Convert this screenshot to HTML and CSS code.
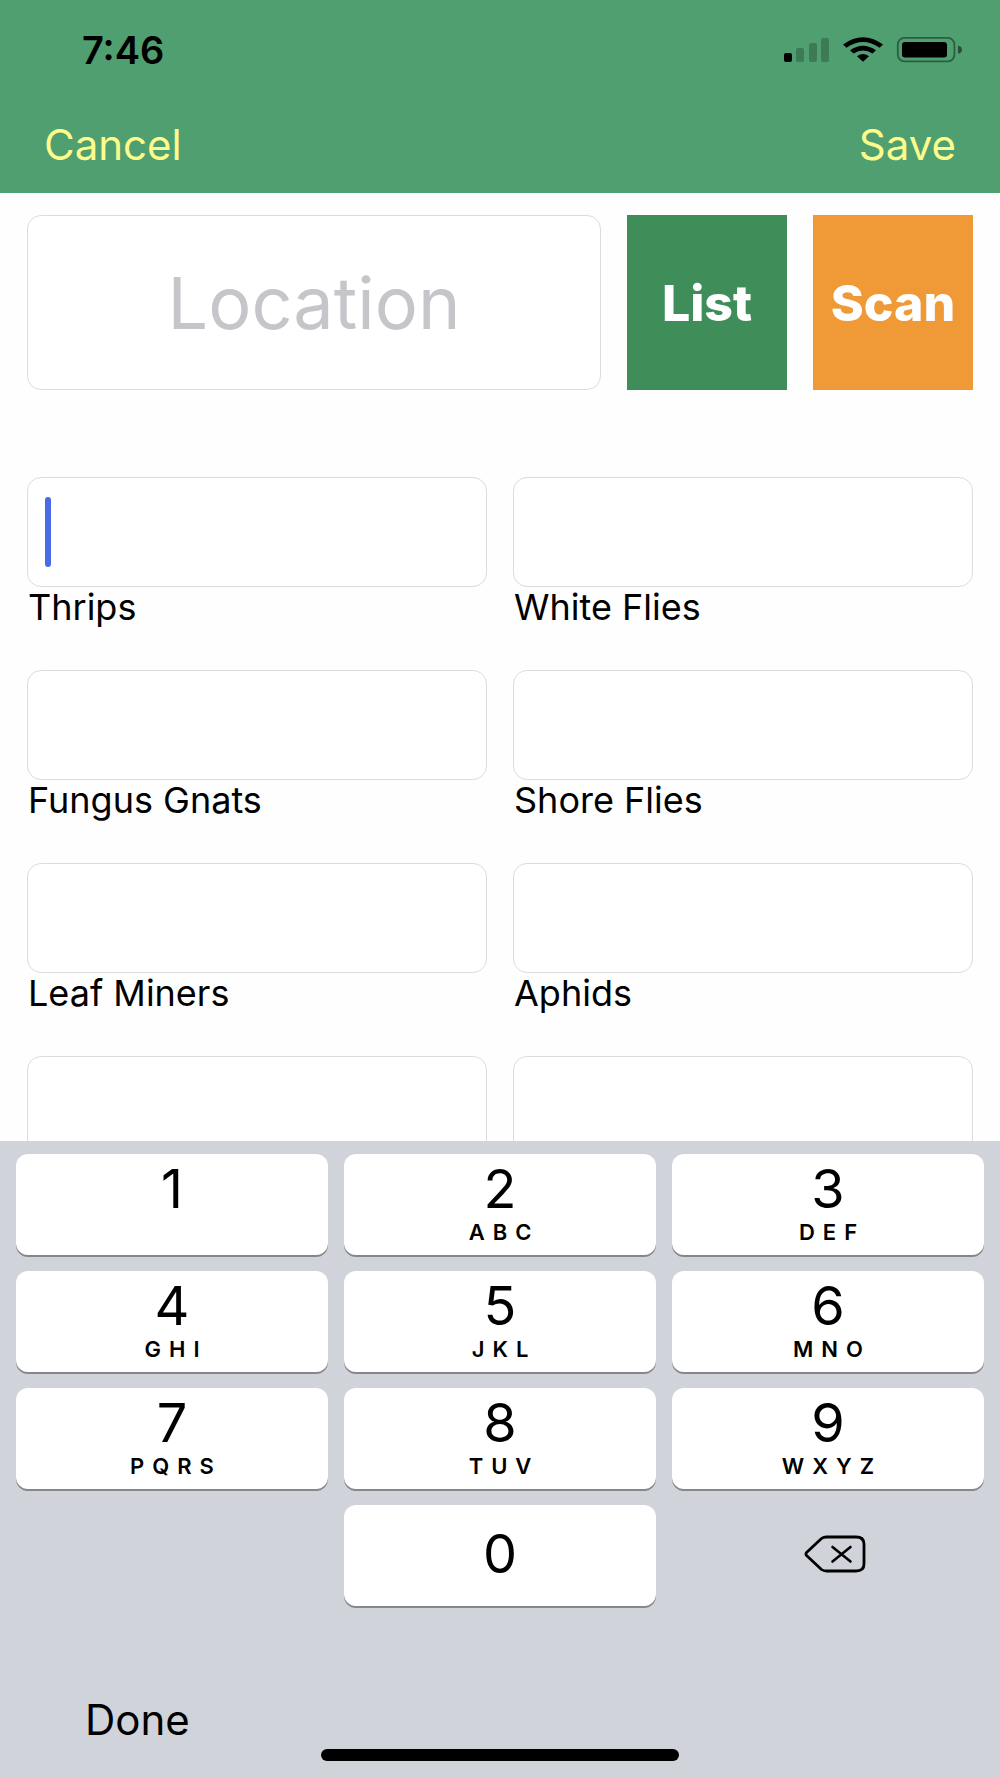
FILE: index.html
```html
<!DOCTYPE html>
<html lang="en">
<head>
    <meta charset="UTF-8">
    <meta name="viewport" content="width=device-width, initial-scale=1.0">
    <title>Pest Count</title>
    <link rel="stylesheet" href="styles.css">
</head>
<body>
    <div class="app">
        <header class="header">
            <div class="status-bar">
                <span class="time">7:46</span>
                <svg class="status-icons" width="178" height="26" viewBox="0 0 178 26">
                    <rect x="0" y="16" width="8" height="9" rx="2"/>
                    <g opacity="0.22">
                        <rect x="12" y="11" width="8" height="14" rx="2"/>
                        <rect x="25" y="6" width="8" height="19" rx="2"/>
                        <rect x="37" y="1" width="8" height="24" rx="2"/>
                    </g>
                    <path d="M59 7.5 Q79 -7 99 7.5 L95.6 10.8 Q79 -0.7 62.4 10.8Z"/>
                    <path d="M66 13.3 Q79 4.2 92 13.3 L88.5 16.6 Q79 10.4 69.5 16.6Z"/>
                    <path d="M73 19.2 Q79 14.8 85 19.2 L79 24.7Z"/>
                    <rect x="113.8" y="0.9" width="56.6" height="23.4" rx="6.5" fill="none" stroke="#000" stroke-width="1.8" opacity="0.42"/>
                    <rect x="118" y="5" width="45" height="15.5" rx="3"/>
                    <path d="M174 8.5 Q178 9.5 178 12.7 Q178 15.8 174 16.8Z" opacity="0.5"/>
                </svg>
            </div>
            <nav class="nav-bar">
                <button class="nav-btn" type="button">Cancel</button>
                <button class="nav-btn" type="button">Save</button>
            </nav>
        </header>

        <main class="content">
            <div class="location-row">
                <input class="box location" type="text" placeholder="Location" aria-label="Location">
                <button class="action list" type="button">List</button>
                <button class="action scan" type="button">Scan</button>
            </div>

            <form class="counts">
                <div class="field">
                    <input class="box" id="thrips" type="text" inputmode="numeric">
                    <span class="caret"></span>
                    <label for="thrips">Thrips</label>
                </div>
                <div class="field">
                    <input class="box" id="white-flies" type="text" inputmode="numeric">
                    <label for="white-flies">White Flies</label>
                </div>
                <div class="field">
                    <input class="box" id="fungus-gnats" type="text" inputmode="numeric">
                    <label for="fungus-gnats">Fungus Gnats</label>
                </div>
                <div class="field">
                    <input class="box" id="shore-flies" type="text" inputmode="numeric">
                    <label for="shore-flies">Shore Flies</label>
                </div>
                <div class="field">
                    <input class="box" id="leaf-miners" type="text" inputmode="numeric">
                    <label for="leaf-miners">Leaf Miners</label>
                </div>
                <div class="field">
                    <input class="box" id="aphids" type="text" inputmode="numeric">
                    <label for="aphids">Aphids</label>
                </div>
                <div class="field">
                    <input class="box" type="text" inputmode="numeric" aria-label="Count">
                </div>
                <div class="field">
                    <input class="box" type="text" inputmode="numeric" aria-label="Count">
                </div>
            </form>
        </main>

        <section class="keyboard">
            <div class="keys">
                <button class="key" type="button">1<span class="letters"></span></button>
                <button class="key" type="button">2<span class="letters">ABC</span></button>
                <button class="key" type="button">3<span class="letters">DEF</span></button>
                <button class="key" type="button">4<span class="letters">GHI</span></button>
                <button class="key" type="button">5<span class="letters">JKL</span></button>
                <button class="key" type="button">6<span class="letters">MNO</span></button>
                <button class="key" type="button">7<span class="letters">PQRS</span></button>
                <button class="key" type="button">8<span class="letters">TUV</span></button>
                <button class="key" type="button">9<span class="letters">WXYZ</span></button>
                <button class="key zero" type="button">0</button>
                <button class="key delete" type="button" aria-label="Delete">
                    <svg width="62" height="38" viewBox="0 0 62 38" fill="none" stroke="#000" stroke-linecap="round" stroke-linejoin="round">
                        <path stroke-width="2.8" d="M22.5 2 H52 Q60 2 60 9 V29 Q60 36 52 36 H22.5 Q19.5 36 17.5 34.5 L2.8 20.8 Q1 19 2.8 17.2 L17.5 3.5 Q19.5 2 22.5 2Z"/>
                        <path stroke-width="2.6" d="M28.5 12 L46.5 26.5 M46.5 12 L28.5 26.5"/>
                    </svg>
                </button>
            </div>
            <div class="toolbar">
                <button class="done" type="button">Done</button>
            </div>
            <div class="home-bar"></div>
        </section>
    </div>
</body>
</html>
```
FILE: styles.css
```css
* {
    box-sizing: border-box;
}

body {
    margin: 0;
    background: #fefefe;
    color: #000;
    font-family: Inter, "Liberation Sans", sans-serif;
}

button {
    border: none;
    padding: 0;
    background: none;
    color: inherit;
    font-family: inherit;
    cursor: pointer;
}

.app {
    height: 100vh;
    display: flex;
    flex-direction: column;
}

/* Header */
.header {
    background: #4f9f70;
}

.status-bar {
    height: 100px;
    padding: 0 38px 0 82px;
    display: flex;
    justify-content: space-between;
    align-items: center;
}

.time {
    font-size: 38px;
    font-weight: 600;
}

.nav-bar {
    height: 93px;
    padding: 0 44px 4px;
    display: flex;
    justify-content: space-between;
    align-items: center;
}

.nav-btn {
    font-size: 42px;
    color: #fdfb8b;
}

/* Form */
.content {
    flex: 1;
    min-height: 0;
    overflow: hidden;
    padding: 22px 27px 0;
}

.box {
    width: 100%;
    height: 110px;
    padding: 0 18px;
    border: 1px solid #dcdcdd;
    border-radius: 14px;
    background: #fff;
    font-family: inherit;
    font-size: 42px;
    outline: none;
}

.location-row {
    display: flex;
    gap: 26px;
    margin-bottom: 87px;
}

.location {
    flex: 1;
    min-width: 0;
    height: 175px;
    font-size: 72px;
    text-align: center;
}

.location::placeholder {
    color: #c6c5ca;
    opacity: 1;
}

.action {
    width: 160px;
    color: #fff;
    font-size: 50px;
    font-weight: 800;
}

.list {
    background: #3f8e59;
}

.scan {
    background: #ef9937;
}

.counts {
    display: grid;
    grid-template-columns: 1fr 1fr;
    gap: 43px 26px;
}

.field {
    position: relative;
    display: flex;
    flex-direction: column;
}

.field label {
    padding-left: 1px;
    font-size: 36px;
    line-height: 40px;
}

.caret {
    position: absolute;
    left: 18px;
    top: 20px;
    width: 6px;
    height: 70px;
    border-radius: 3px;
    background: #4a6be8;
}

/* Keyboard */
.keyboard {
    padding: 13px 16px 17px;
    background: #d0d3d9;
}

.keys {
    display: grid;
    grid-template-columns: repeat(3, 1fr);
    grid-auto-rows: 101px;
    gap: 16px;
}

.key {
    display: flex;
    flex-direction: column;
    align-items: center;
    justify-content: center;
    padding-bottom: 4px;
    border-radius: 12px;
    background: #fff;
    box-shadow: 0 2px 0 #85878b;
    font-size: 54px;
    line-height: 58px;
}

.letters {
    height: 28px;
    padding-left: 8px;
    font-size: 22px;
    font-weight: 600;
    line-height: 28px;
    letter-spacing: 8px;
}

.zero {
    grid-column: 2;
}

.delete {
    padding-left: 14px;
    background: none;
    box-shadow: none;
}

.toolbar {
    height: 50px;
    margin-top: 88px;
    padding-left: 69px;
    display: flex;
    align-items: center;
}

.done {
    font-size: 42px;
}

.home-bar {
    width: 37%;
    height: 12px;
    margin: 5px auto 0;
    border-radius: 6px;
    background: #000;
}
```
